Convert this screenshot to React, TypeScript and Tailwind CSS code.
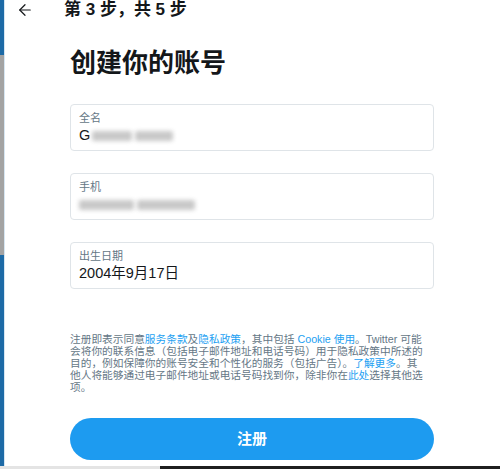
import React from "react";
import { ArrowLeft } from "lucide-react";

const font = { fontFamily: '"Liberation Sans", "Noto Sans CJK SC", sans-serif' };

function Field({ label, children }: { label: string; children: React.ReactNode }) {
  return (
    <div className="box-border h-[47px] w-full rounded-[4px] border border-[#dfe4e8] px-[8px] pt-[6px]">
      <div className="text-[11px] leading-[14px] text-[#657786]">{label}</div>
      <div className="flex h-[22px] items-center text-[14.5px] text-[#14171a]">{children}</div>
    </div>
  );
}

function Blur({ w }: { w: number }) {
  return (
    <span
      className="inline-block h-[10px] rounded-[2px] bg-[#c9c9c9] blur-[2px]"
      style={{ width: w }}
    />
  );
}

export default function App() {
  return (
    <div className="flex h-[469px] w-[500px] flex-col overflow-hidden bg-white" style={font}>
      <div className="flex flex-1">
        {/* page behind the dialog */}
        <div className="flex w-[4px] flex-col">
          <div className="h-[55px] bg-[#1d6aa6]" />
          <div className="h-[200px] bg-[#a3a3a3]" />
          <div className="flex-1 bg-[#1d6aa6]" />
        </div>

        <div className="flex flex-1 flex-col border-l border-[#d6e6f2] bg-white">
          {/* Header */}
          <div className="flex h-[20px] items-center">
            <ArrowLeft size={18} strokeWidth={1.6} className="ml-[11px] text-[#14171a]" />
            <span className="ml-[30px] text-[17px] font-bold text-[#14171a]">第 3 步，共 5 步</span>
          </div>

          <div className="ml-[65px] mr-[66px] flex flex-col">
            <h1 className="mt-[27px] text-[26px] font-bold leading-[32px] text-[#14171a]">创建你的账号</h1>

            <div className="mt-[25px] flex flex-col gap-[22px]">
              <Field label="全名">
                <span>G</span>
                <span className="ml-[2px] flex items-center gap-[3px]">
                  <Blur w={40} />
                  <Blur w={38} />
                </span>
              </Field>
              <Field label="手机">
                <span className="flex items-center gap-[3px]">
                  <Blur w={55} />
                  <Blur w={58} />
                </span>
              </Field>
              <Field label="出生日期">2004年9月17日</Field>
            </div>

            <p className="mt-[44px] text-[10.7px] leading-[12px] text-[#657786]">
              <span className="block whitespace-nowrap">
                注册即表示同意<a className="text-[#1da1f2]">服务条款</a>及<a className="text-[#1da1f2]">隐私政策</a>，其中包括 <a className="text-[#1da1f2]">Cookie 使用</a>。Twitter 可能
              </span>
              <span className="block whitespace-nowrap">会将你的联系信息（包括电子邮件地址和电话号码）用于隐私政策中所述的</span>
              <span className="block whitespace-nowrap">
                目的，例如保障你的账号安全和个性化的服务（包括广告）。<a className="text-[#1da1f2]">了解更多</a>。其
              </span>
              <span className="block whitespace-nowrap">
                他人将能够通过电子邮件地址或电话号码找到你，除非你在<a className="text-[#1da1f2]">此处</a>选择其他选
              </span>
              <span className="block whitespace-nowrap">项。</span>
            </p>

            <button className="mt-[25px] h-[42px] w-full rounded-full bg-[#1d9bf0] text-[15px] font-bold text-white">
              注册
            </button>
          </div>
        </div>
      </div>

      {/* taskbar edge */}
      <div className="flex h-[3px]">
        <div className="w-[160px] bg-[#e4e4e4]" />
        <div className="flex-1 bg-[#1f1f1f]" />
      </div>
    </div>
  );
}
